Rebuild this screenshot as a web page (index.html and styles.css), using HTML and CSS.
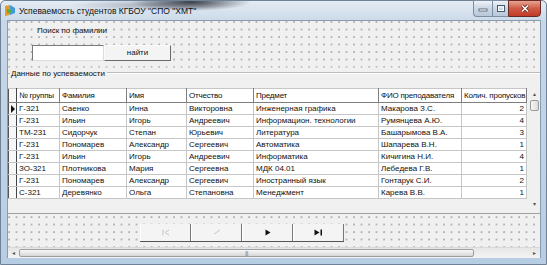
FILE: index.html
```html
<!DOCTYPE html>
<html>
<head>
	<title>Успеваемость студентов</title>
	<link rel="stylesheet" href="styles.css">
</head>
<body>
	<div class="window">
		<div class="titlebar">
			<svg class="appicon" width="12" height="13" viewBox="0 0 12 13">
				<path d="M1 2 L6 1 L6 11 L1 12 Z" fill="#e49a2a"/>
				<path d="M6 1 L11 4 L11 9 L6 11 Z" fill="#3f9bd6"/>
				<path d="M3 5 L8 6 L8 9 L3 9 Z" fill="#57b043"/>
			</svg>
			<span class="caption">Успеваемость студентов КГБОУ "СПО "ХМТ"</span>
			<div class="controls">
				<div class="ctl">
					<svg width="10" height="6" viewBox="0 0 10 6"><rect x="1" y="3" width="8" height="2" fill="#fff" stroke="#4a5a6e" stroke-width="0.8"/></svg>
				</div>
				<div class="ctl">
					<svg width="10" height="9" viewBox="0 0 10 9"><rect x="1.5" y="1.5" width="7" height="6" fill="none" stroke="#4a5a6e" stroke-width="1"/><rect x="2.5" y="3" width="5" height="3.5" fill="none" stroke="#fff" stroke-width="1"/></svg>
				</div>
				<div class="ctl close">
					<svg width="10" height="9" viewBox="0 0 10 9"><path d="M2 1.5 L8 7.5 M8 1.5 L2 7.5" stroke="#5a1a14" stroke-width="3"/><path d="M2 1.5 L8 7.5 M8 1.5 L2 7.5" stroke="#fff" stroke-width="1.6"/></svg>
				</div>
			</div>
		</div>
		<div class="client">
			<div class="search">
				<p class="search-label">Поиск по фамилии</p>
				<div class="search-row">
					<div class="textbox"></div>
					<div class="btn">найти</div>
				</div>
			</div>
			<div class="group">
				<div class="group-head">
					<span class="group-title">Данные по успеваемости</span>
					<span class="group-line"></span>
				</div>
				<div class="grid">
					<table class="table">
						<colgroup>
							<col style="width:8px"><col style="width:43px"><col style="width:67px"><col style="width:60px"><col style="width:67px"><col style="width:125px"><col style="width:83px"><col style="width:65px">
						</colgroup>
						<tr class="head">
							<th class="ind"></th><th>№ группы</th><th>Фамилия</th><th>Имя</th><th>Отчество</th><th>Предмет</th><th>ФИО преподавателя</th><th>Колич. пропусков</th>
						</tr>
						<tr><td class="ind cur"><span class="arrow"></span></td><td>Г-321</td><td>Саенко</td><td>Инна</td><td>Викторовна</td><td>Инженерная графика</td><td>Макарова З.С.</td><td class="num">2</td></tr>
						<tr><td class="ind"></td><td>Г-231</td><td>Ильин</td><td>Игорь</td><td>Андреевич</td><td>Информацион. технологии</td><td>Румянцева А.Ю.</td><td class="num">4</td></tr>
						<tr><td class="ind"></td><td>ТМ-231</td><td>Сидорчук</td><td>Степан</td><td>Юрьевич</td><td>Литература</td><td>Башарымова В.А.</td><td class="num">3</td></tr>
						<tr><td class="ind"></td><td>Г-231</td><td>Пономарев</td><td>Александр</td><td>Сергеевич</td><td>Автоматика</td><td>Шапарева В.Н.</td><td class="num">1</td></tr>
						<tr><td class="ind"></td><td>Г-231</td><td>Ильин</td><td>Игорь</td><td>Андреевич</td><td>Информатика</td><td>Кичигина Н.И.</td><td class="num">4</td></tr>
						<tr><td class="ind"></td><td>ЗО-321</td><td>Плотникова</td><td>Мария</td><td>Сергеевна</td><td>МДК 04.01</td><td>Лебедева Г.В.</td><td class="num">1</td></tr>
						<tr><td class="ind"></td><td>Г-231</td><td>Пономарев</td><td>Александр</td><td>Сергеевич</td><td>Иностранный язык</td><td>Гонтарук С.И.</td><td class="num">2</td></tr>
						<tr><td class="ind"></td><td>С-321</td><td>Деревянко</td><td>Ольга</td><td>Степановна</td><td>Менеджмент</td><td>Карева В.В.</td><td class="num">1</td></tr>
					</table>
					<div class="vscroll">
						<span class="sarrow">&#9652;</span>
						<span class="vthumb"></span>
						<span class="vspace"></span>
						<span class="sarrow">&#9662;</span>
					</div>
				</div>
			</div>
			<div class="navarea">
				<div class="nav">
					<div class="navbtn off">
						<svg width="8" height="7" viewBox="0 0 8 7"><path d="M1 0.5 V6.5" stroke="#c4c4c4"/><path d="M7 1 L3 3.5 L7 6" fill="none" stroke="#c4c4c4"/></svg>
					</div>
					<div class="navbtn off">
						<svg width="8" height="7" viewBox="0 0 8 7"><path d="M7 1 L1 5" stroke="#c8c8c8"/></svg>
					</div>
					<div class="navbtn">
						<svg width="6" height="7" viewBox="0 0 6 7"><path d="M0.5 0.5 L5.5 3.5 L0.5 6.5 Z" fill="#111"/></svg>
					</div>
					<div class="navbtn">
						<svg width="9" height="7" viewBox="0 0 9 7"><path d="M0.5 0.5 L5.5 3.5 L0.5 6.5 Z" fill="#111"/><rect x="6.5" y="0.5" width="1.5" height="6" fill="#111"/></svg>
					</div>
				</div>
			</div>
			<div class="hscroll">
				<span class="sarrow">&#9666;</span>
				<span class="hthumb"><span class="grip">&#124;&#124;&#124;</span></span>
				<span class="hspace"></span>
				<span class="sarrow">&#9656;</span>
			</div>
		</div>
	</div>
</body>
</html>
```
FILE: styles.css
```css
html, body {
	margin: 0;
	padding: 0;
}
body {
	width: 547px;
	height: 265px;
	overflow: hidden;
	background: #ffffff;
	font-family: "Liberation Sans", Arial, sans-serif;
	font-size: 8px;
	color: #111;
}
.window {
	width: 547px;
	height: 265px;
	box-sizing: border-box;
	display: flex;
	flex-direction: column;
	background: linear-gradient(to bottom, #c9d8e8, #b7cde4);
	border: 1px solid #6f8197;
	border-radius: 5px 5px 0 0;
	padding: 0 5px 6px 6px;
}
.titlebar {
	height: 19px;
	flex-shrink: 0;
	display: flex;
	align-items: center;
	margin: 0 -5px 0 -6px;
	padding: 0 5px 0 3px;
	background:
		radial-gradient(ellipse 60px 9px at 190px 1px, rgba(30, 36, 46, 0.85), rgba(30, 36, 46, 0) 100%),
		radial-gradient(ellipse 80px 6px at 150px 4px, rgba(60, 70, 85, 0.35), rgba(60, 70, 85, 0) 100%),
		linear-gradient(to bottom, #e4ecf4, #ccdae9);
	border-radius: 5px 5px 0 0;
}
.appicon {
	margin-right: 3px;
}
.caption {
	font-size: 8.5px;
	color: #111;
	flex: 1;
	padding-top: 1px;
}
.controls {
	display: flex;
	align-self: flex-start;
	margin-top: -1px;
}
.ctl {
	width: 15px;
	height: 15px;
	display: flex;
	align-items: center;
	justify-content: center;
	border: 1px solid #7d8ea3;
	border-right: none;
	background: linear-gradient(to bottom, #eef3f8, #c9d6e4 50%, #b9c9da);
}
.ctl:first-child {
	width: 18px;
	border-radius: 0 0 0 4px;
}
.ctl.close {
	width: 31px;
	border: 1px solid #6a2a24;
	border-radius: 0 0 4px 0;
	background: linear-gradient(to bottom, #e8a493, #cf5a45 50%, #c23c28);
}
.client {
	flex: 1;
	display: flex;
	flex-direction: column;
	background-color: #f0f0f0;
	background-image: radial-gradient(circle at 1px 1px, #a4a4a4 0.6px, rgba(0, 0, 0, 0) 0.9px);
	background-size: 7.5px 7.5px;
	border: 1px solid #8a9bb0;
	border-bottom: none;
}
.search {
	height: 46px;
	flex-shrink: 0;
	padding-left: 24px;
}
.search-label {
	margin: 4px 0 0 5px;
	font-size: 8px;
	line-height: 11px;
}
.search-row {
	display: flex;
	margin-top: 9px;
}
.textbox {
	width: 70px;
	height: 14px;
	background: #fff;
	border: 1px solid #7a7a7a;
	border-right-color: #dcdcdc;
	border-bottom-color: #dcdcdc;
}
.btn {
	width: 67px;
	height: 16px;
	box-sizing: border-box;
	background: #f4f4f4;
	border: 1px solid #fafafa;
	border-right-color: #6b6b6b;
	border-bottom-color: #6b6b6b;
	text-align: center;
	line-height: 14px;
	font-size: 8px;
}
.group {
	flex-shrink: 0;
	background: #f0f0f0;
	display: flex;
	flex-direction: column;
	border-bottom: 1px solid #a0a0a0;
}
.group-head {
	display: flex;
	align-items: flex-start;
	height: 21px;
	padding-left: 3px;
	background-image: radial-gradient(circle at 1px 1px, #a4a4a4 0.6px, rgba(0, 0, 0, 0) 0.9px);
	background-size: 7.5px 7.5px;
	background-position: 0 -1px;
	background-repeat: repeat-x;
}
.group-title {
	background: #f0f0f0;
	padding-right: 2px;
	line-height: 11px;
	margin-top: 1px;
}
.group-line {
	flex: 1;
	height: 0;
	margin-top: 5px;
	border-top: 1px solid #bcbcbc;
	border-bottom: 1px solid #ffffff;
}
.grid {
	height: 125px;
	flex-shrink: 0;
	display: flex;
	align-items: flex-start;
	background: #f0f0f0;
}
.table {
	border-collapse: collapse;
	table-layout: fixed;
	width: 518px;
}
.table th, .table td {
	height: 11px;
	padding: 0 2px;
	border: 1px solid #c6c6c6;
	background: #fff;
	font-weight: normal;
	text-align: left;
	white-space: nowrap;
	overflow: hidden;
	line-height: 11px;
	font-size: 8px;
}
.table th {
	height: 13px;
	letter-spacing: -0.2px;
	border-color: #7f7f7f;
	border-top-color: #c6c6c6;
}
.table .ind {
	padding: 0;
	background: #f7f7f7;
	border-left: 1px solid #555;
	border-right: 1px solid #444;
}
.table td.num {
	text-align: right;
}
.arrow {
	display: block;
	width: 0;
	height: 0;
	margin-left: 2px;
	border-left: 4px solid #111;
	border-top: 4px solid transparent;
	border-bottom: 4px solid transparent;
}
.vscroll {
	width: 13px;
	height: 122px;
	margin-left: 2px;
	display: flex;
	flex-direction: column;
	align-items: center;
	background: #f0f0f0;
}
.sarrow {
	font-size: 6px;
	line-height: 12px;
	color: #555;
}
.vthumb {
	width: 9px;
	height: 11px;
	box-sizing: border-box;
	border: 1px solid #9a9a9a;
	border-radius: 2px;
	background: linear-gradient(to right, #f6f6f6, #dcdcdc);
}
.vspace {
	flex: 1;
}
.navarea {
	flex: 1;
	display: flex;
	align-items: flex-start;
	padding-left: 132px;
	padding-top: 10px;
}
.nav {
	display: flex;
	border-bottom: 1px solid #555;
}
.navbtn {
	width: 51px;
	height: 17px;
	box-sizing: border-box;
	display: flex;
	align-items: center;
	justify-content: center;
	background: #f4f4f4;
	border-right: 1px solid #777;
	border-left: 1px solid #fff;
}
.hscroll {
	height: 10px;
	flex-shrink: 0;
	display: flex;
	align-items: center;
	background: linear-gradient(to bottom, #e6e6e6, #f4f4f4);
	border-top: 1px solid #d8d8d8;
}
.hscroll .sarrow {
	width: 11px;
	text-align: center;
	line-height: 10px;
}
.hthumb {
	width: 455px;
	height: 8px;
	box-sizing: border-box;
	border: 1px solid #9e9e9e;
	border-radius: 2px;
	background: linear-gradient(to bottom, #f8f8f8, #d6d6d6);
	display: flex;
	justify-content: center;
	align-items: center;
}
.grip {
	font-size: 5px;
	line-height: 6px;
	color: #666;
	letter-spacing: -0.5px;
}
.hspace {
	flex: 1;
}
```
